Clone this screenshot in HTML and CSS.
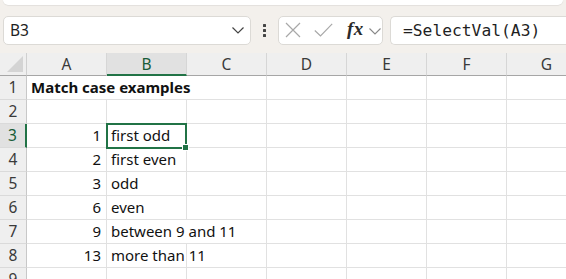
FILE: index.html
```html
<!DOCTYPE html>
<html>
<head>
<meta charset="utf-8">
<link rel="stylesheet" href="styles.css">
</head>
<body>
<div class="ribbon-edge"></div>
<div class="formula-bar">
  <div class="name-box">
    <span class="name-text">B3</span>
    <svg class="chev" width="12" height="7" viewBox="0 0 12 7"><path d="M0.5 0.5 L6 6 L11.5 0.5" fill="none" stroke="#444" stroke-width="1.2"/></svg>
  </div>
  <div class="grip">
    <span></span><span></span><span></span>
  </div>
  <div class="tools">
    <svg class="tool-x" width="16" height="16" viewBox="0 0 16 16"><path d="M1 1 L15 15 M15 1 L1 15" stroke="#a8a8a8" stroke-width="1.2" fill="none"/></svg>
    <svg class="tool-check" width="19" height="14" viewBox="0 0 19 14"><path d="M0.8 7.5 L6.5 13 L18.2 0.8" stroke="#a8a8a8" stroke-width="1.2" fill="none"/></svg>
    <span class="fx">fx</span>
    <svg class="chev-small" width="12" height="7" viewBox="0 0 12 7"><path d="M0.5 0.5 L6 6 L11.5 0.5" fill="none" stroke="#888" stroke-width="1.1"/></svg>
  </div>
  <div class="formula-box"><span class="formula">=SelectVal(A3)</span></div>
</div>
<div class="sheet">
  <div class="grid">
    <div class="corner"><div class="tri"></div></div>
    <div class="ch">A</div><div class="ch sel">B</div><div class="ch">C</div><div class="ch">D</div><div class="ch">E</div><div class="ch">F</div><div class="ch">G</div>

    <div class="rh">1</div><div class="c span3 bold">Match case examples</div><div class="c"></div><div class="c"></div><div class="c"></div><div class="c"></div>
    <div class="rh">2</div><div class="c"></div><div class="c"></div><div class="c"></div><div class="c"></div><div class="c"></div><div class="c"></div><div class="c"></div>
    <div class="rh sel">3</div><div class="c num">1</div><div class="c">first odd</div><div class="c"></div><div class="c"></div><div class="c"></div><div class="c"></div><div class="c"></div>
    <div class="rh">4</div><div class="c num">2</div><div class="c">first even</div><div class="c"></div><div class="c"></div><div class="c"></div><div class="c"></div><div class="c"></div>
    <div class="rh">5</div><div class="c num">3</div><div class="c">odd</div><div class="c"></div><div class="c"></div><div class="c"></div><div class="c"></div><div class="c"></div>
    <div class="rh">6</div><div class="c num">6</div><div class="c">even</div><div class="c"></div><div class="c"></div><div class="c"></div><div class="c"></div><div class="c"></div>
    <div class="rh">7</div><div class="c num">9</div><div class="c span2">between 9 and 11</div><div class="c"></div><div class="c"></div><div class="c"></div><div class="c"></div>
    <div class="rh">8</div><div class="c num">13</div><div class="c">more than 11</div><div class="c"></div><div class="c"></div><div class="c"></div><div class="c"></div><div class="c"></div>
    <div class="rh">9</div><div class="c"></div><div class="c"></div><div class="c"></div><div class="c"></div><div class="c"></div><div class="c"></div><div class="c"></div>
  </div>
  <div class="selection"><div class="handle"></div></div>
</div>
</body>
</html>
```
FILE: styles.css
```css
html, body {
  margin: 0;
  padding: 0;
}
body {
  width: 566px;
  height: 279px;
  overflow: hidden;
  background: #f3f0ec;
  font-family: "Noto Sans", "Liberation Sans", sans-serif;
}
.ribbon-edge {
  height: 5px;
  margin: 0 3px;
  background: #ffffff;
  border-radius: 0 0 6px 6px;
  box-shadow: 0 0.5px 1px rgba(0,0,0,0.12);
}
.formula-bar {
  display: flex;
  align-items: center;
  height: 30px;
  margin-top: 10px;
  padding-left: 3px;
}
.name-box {
  box-sizing: border-box;
  width: 248px;
  height: 29px;
  background: #fff;
  border: 1px solid #dcdad6;
  border-radius: 5px;
  display: flex;
  align-items: center;
  justify-content: space-between;
  padding: 0 6px 0 6px;
}
.name-text {
  font-size: 15.5px;
  color: #1f1f1f;
}
.chev { margin-top: 1px; }
.grip {
  width: 27px;
  display: flex;
  flex-direction: column;
  align-items: center;
  gap: 2px;
}
.grip span {
  width: 3px;
  height: 3px;
  background: #444;
  border-radius: 0.5px;
}
.tools {
  box-sizing: border-box;
  width: 105px;
  height: 29px;
  background: #fff;
  border: 1px solid #dcdad6;
  border-radius: 5px;
  display: flex;
  align-items: center;
  padding-left: 6px;
}
.tool-x { margin-right: 13px; }
.tool-check { margin-right: 14px; }
.fx {
  font-family: "Liberation Serif", "DejaVu Serif", serif;
  font-style: italic;
  font-weight: bold;
  font-size: 19px;
  color: #2a2a2a;
  letter-spacing: 0.5px;
  margin-top: -3px;
}
.chev-small { margin-left: 5px; margin-top: 2px; }
.formula-box {
  box-sizing: border-box;
  margin-left: 7px;
  height: 29px;
  background: #fff;
  border: 1px solid #dcdad6;
  border-right: none;
  border-radius: 5px 0 0 5px;
  display: flex;
  align-items: center;
  padding-left: 12px;
  flex: 1;
}
.formula {
  font-family: "DejaVu Sans Mono", "Liberation Mono", monospace;
  font-size: 16.3px;
  color: #1f1f1f;
}
.sheet {
  position: relative;
  margin-top: 8px;
  background: #fff;
}
.grid {
  display: grid;
  grid-template-columns: 27px repeat(7, 80px);
  grid-template-rows: 23px repeat(9, 24px);
  width: 587px;
}
.grid > div {
  box-sizing: border-box;
}
.corner {
  background: #efefef;
  border-right: 1px solid #d0d0d0;
  border-bottom: 1px solid #a6a6a6;
  position: relative;
}
.tri {
  position: absolute;
  right: 3px;
  bottom: 3px;
  width: 0;
  height: 0;
  border-left: 16px solid transparent;
  border-bottom: 16px solid #d4d4d4;
}
.ch {
  background: #efefef;
  border-right: 1px solid #d6d6d6;
  border-bottom: 1px solid #a6a6a6;
  text-align: center;
  font-size: 15.5px;
  line-height: 22px;
  color: #3a3a3a;
}
.ch.sel {
  background: #e1e1e1;
  border-bottom: 2px solid #217346;
  color: #185c37;
}
.rh {
  background: #efefef;
  border-right: 1px solid #c8c8c8;
  border-bottom: 1px solid #dadada;
  text-align: center;
  font-size: 15.5px;
  line-height: 23px;
  color: #3a3a3a;
}
.rh.sel {
  background: #e1e1e1;
  border-right: 2px solid #217346;
  color: #185c37;
}
.c {
  border-right: 1px solid #e1e1e1;
  border-bottom: 1px solid #e1e1e1;
  font-size: 15px;
  line-height: 23px;
  padding: 0 5px 0 4px;
  white-space: nowrap;
  color: #111;
}
.c.span3 { grid-column: span 3; }
.c.span2 { grid-column: span 2; }
.c.bold {
  font-weight: bold;
}
.c.num {
  text-align: right;
}
.selection {
  position: absolute;
  left: 106px;
  top: 70px;
  width: 81px;
  height: 26px;
  box-sizing: border-box;
  border: 2px solid #217346;
}
.handle {
  position: absolute;
  right: -4px;
  bottom: -4px;
  width: 5px;
  height: 5px;
  background: #217346;
  border: 1px solid #fff;
}
```
